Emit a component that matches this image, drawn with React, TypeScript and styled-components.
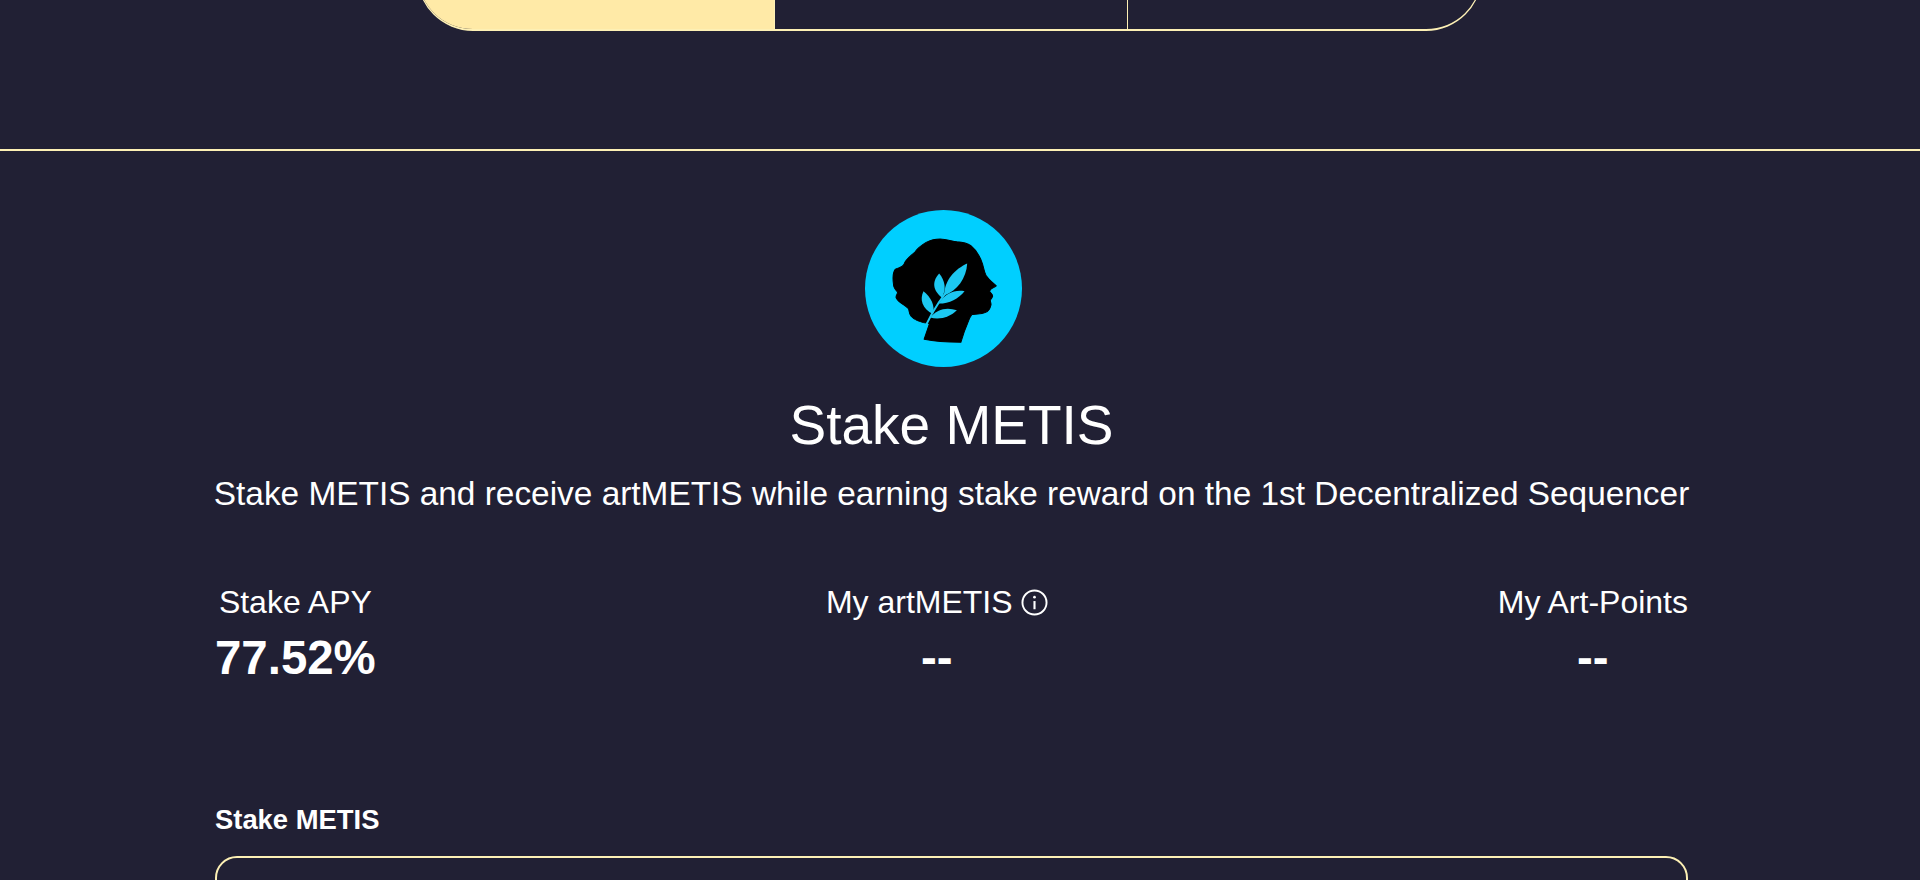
import React from "react";
import styled, { createGlobalStyle } from "styled-components";

const cream = "#fdf0b5";

const Global = createGlobalStyle`
  html, body { margin: 0; padding: 0; background: #212034; }
  body { font-family: "Liberation Sans", Arial, sans-serif; color: #fff; overflow: hidden; height: 880px; }
`;

const Page = styled.div`
  height: 880px;
  overflow: hidden;
`;

const TopSection = styled.section`
  height: 149px;
  border-bottom: 2px solid ${cream};
  padding-left: 417px;
  overflow: hidden;
`;

const TabBar = styled.div`
  width: 1065px;
  height: 140px;
  margin-top: -109px;
  display: grid;
  grid-template-columns: 356px 353px 354px;
  box-sizing: border-box;
  border: 1px solid ${cream};
  border-bottom-width: 2px;
  border-radius: 56px;
  overflow: hidden;
`;

const Tab = styled.div<{ $active?: boolean }>`
  background: ${(p) => (p.$active ? "#ffeaa7" : "transparent")};
  border-left: ${(p) => (p.$active ? "none" : `1px solid ${cream}`)};
`;

const Main = styled.main`
  width: 1473px;
  margin-left: 215px;
  padding-top: 59px;
  display: flex;
  flex-direction: column;
`;

const Header = styled.header`
  display: flex;
  flex-direction: column;
  align-items: center;
`;

const Logo = styled.svg`
  width: 157px;
  height: 157px;
  margin-right: 16px;
  display: block;
`;

const Title = styled.h1`
  margin: 26px 0 0;
  font-size: 55px;
  line-height: 64px;
  font-weight: 400;
`;

const Subtitle = styled.p`
  margin: 17px 0 0;
  font-size: 33.4px;
  line-height: 40px;
  white-space: nowrap;
`;

const Stats = styled.div`
  display: flex;
  justify-content: space-between;
  margin-top: 68px;
`;

const Stat = styled.div`
  display: flex;
  flex-direction: column;
  align-items: center;
`;

const StatLabel = styled.div`
  display: flex;
  align-items: center;
  gap: 8px;
  font-size: 32px;
  line-height: 40px;
`;

const StatValue = styled.div`
  margin-top: 8px;
  font-size: 47.4px;
  line-height: 56px;
  font-weight: 700;
`;

const FieldLabel = styled.div`
  margin-top: 118px;
  font-size: 27.4px;
  line-height: 32px;
  font-weight: 700;
`;

const Field = styled.div`
  margin-top: 20px;
  height: 120px;
  box-sizing: border-box;
  border: 2px solid ${cream};
  border-radius: 22px;
`;

const InfoIcon = () => (
  <svg width="27" height="27" viewBox="0 0 28 28" fill="none" stroke="#fff" strokeWidth="2">
    <circle cx="14" cy="14" r="12.5" />
    <path d="M14 12.5V21" strokeWidth="2.2" />
    <circle cx="14" cy="8.5" r="1.4" fill="#fff" stroke="none" />
  </svg>
);

const HeadLogo = () => (
  <Logo viewBox="75 60 470 470">
    <circle cx="310" cy="295" r="235" fill="#00cfff" />
    <path
      fill="#000"
      stroke="#000"
      strokeWidth="3"
      strokeLinejoin="round"
      d="M252 447 L268 400 C250 398 225 392 213 378 C206 370 208 362 205 355 C195 345 172 335 168 322 C167 314 174 312 172 305 C165 298 160 292 160 280 C158 265 158 248 165 238 C175 232 188 232 192 222 C196 208 212 198 225 185 C232 175 245 165 258 157 C272 150 285 147 300 147 C318 148 335 153 350 155 C365 156 380 158 392 167 C408 180 420 200 427 222 C430 232 432 245 437 255 C445 268 458 278 468 287 C462 292 455 294 452 297 C449 300 448 303 449 305 C453 310 458 314 457 318 C456 324 450 327 450 332 C452 338 453 342 452 345 C450 355 447 360 441 364 C430 371 410 372 395 373 C390 380 387 386 385 392 L372 425 L362 456 C325 456 285 454 252 447 Z"
    />
    <g fill="#1cc8f2">
      <path d="M312 316 C312 270 345 236 381 220 C378 265 352 300 312 316 Z" />
      <path d="M305 322 C272 296 280 268 297 250 C314 270 320 298 305 322 Z" />
      <path d="M296 340 C315 308 345 298 373 303 C355 325 328 340 296 340 Z" />
      <path d="M279 372 C246 355 238 328 250 303 C272 320 285 345 279 372 Z" />
      <path d="M270 382 C290 356 320 350 350 360 C330 380 300 390 270 382 Z" />
      <path d="M258 404 Q288 340 348 268" fill="none" stroke="#1cc8f2" strokeWidth="6" />
    </g>
  </Logo>
);

export default function App() {
  return (
    <Page>
      <Global />
      <TopSection>
        <TabBar>
          <Tab $active />
          <Tab />
          <Tab />
        </TabBar>
      </TopSection>
      <Main>
        <Header>
          <HeadLogo />
          <Title>Stake METIS</Title>
          <Subtitle>Stake METIS and receive artMETIS while earning stake reward on the 1st Decentralized Sequencer</Subtitle>
        </Header>
        <Stats>
          <Stat>
            <StatLabel>Stake APY</StatLabel>
            <StatValue>77.52%</StatValue>
          </Stat>
          <Stat>
            <StatLabel>
              My artMETIS <InfoIcon />
            </StatLabel>
            <StatValue>--</StatValue>
          </Stat>
          <Stat>
            <StatLabel>My Art-Points</StatLabel>
            <StatValue>--</StatValue>
          </Stat>
        </Stats>
        <FieldLabel>Stake METIS</FieldLabel>
        <Field />
      </Main>
    </Page>
  );
}
